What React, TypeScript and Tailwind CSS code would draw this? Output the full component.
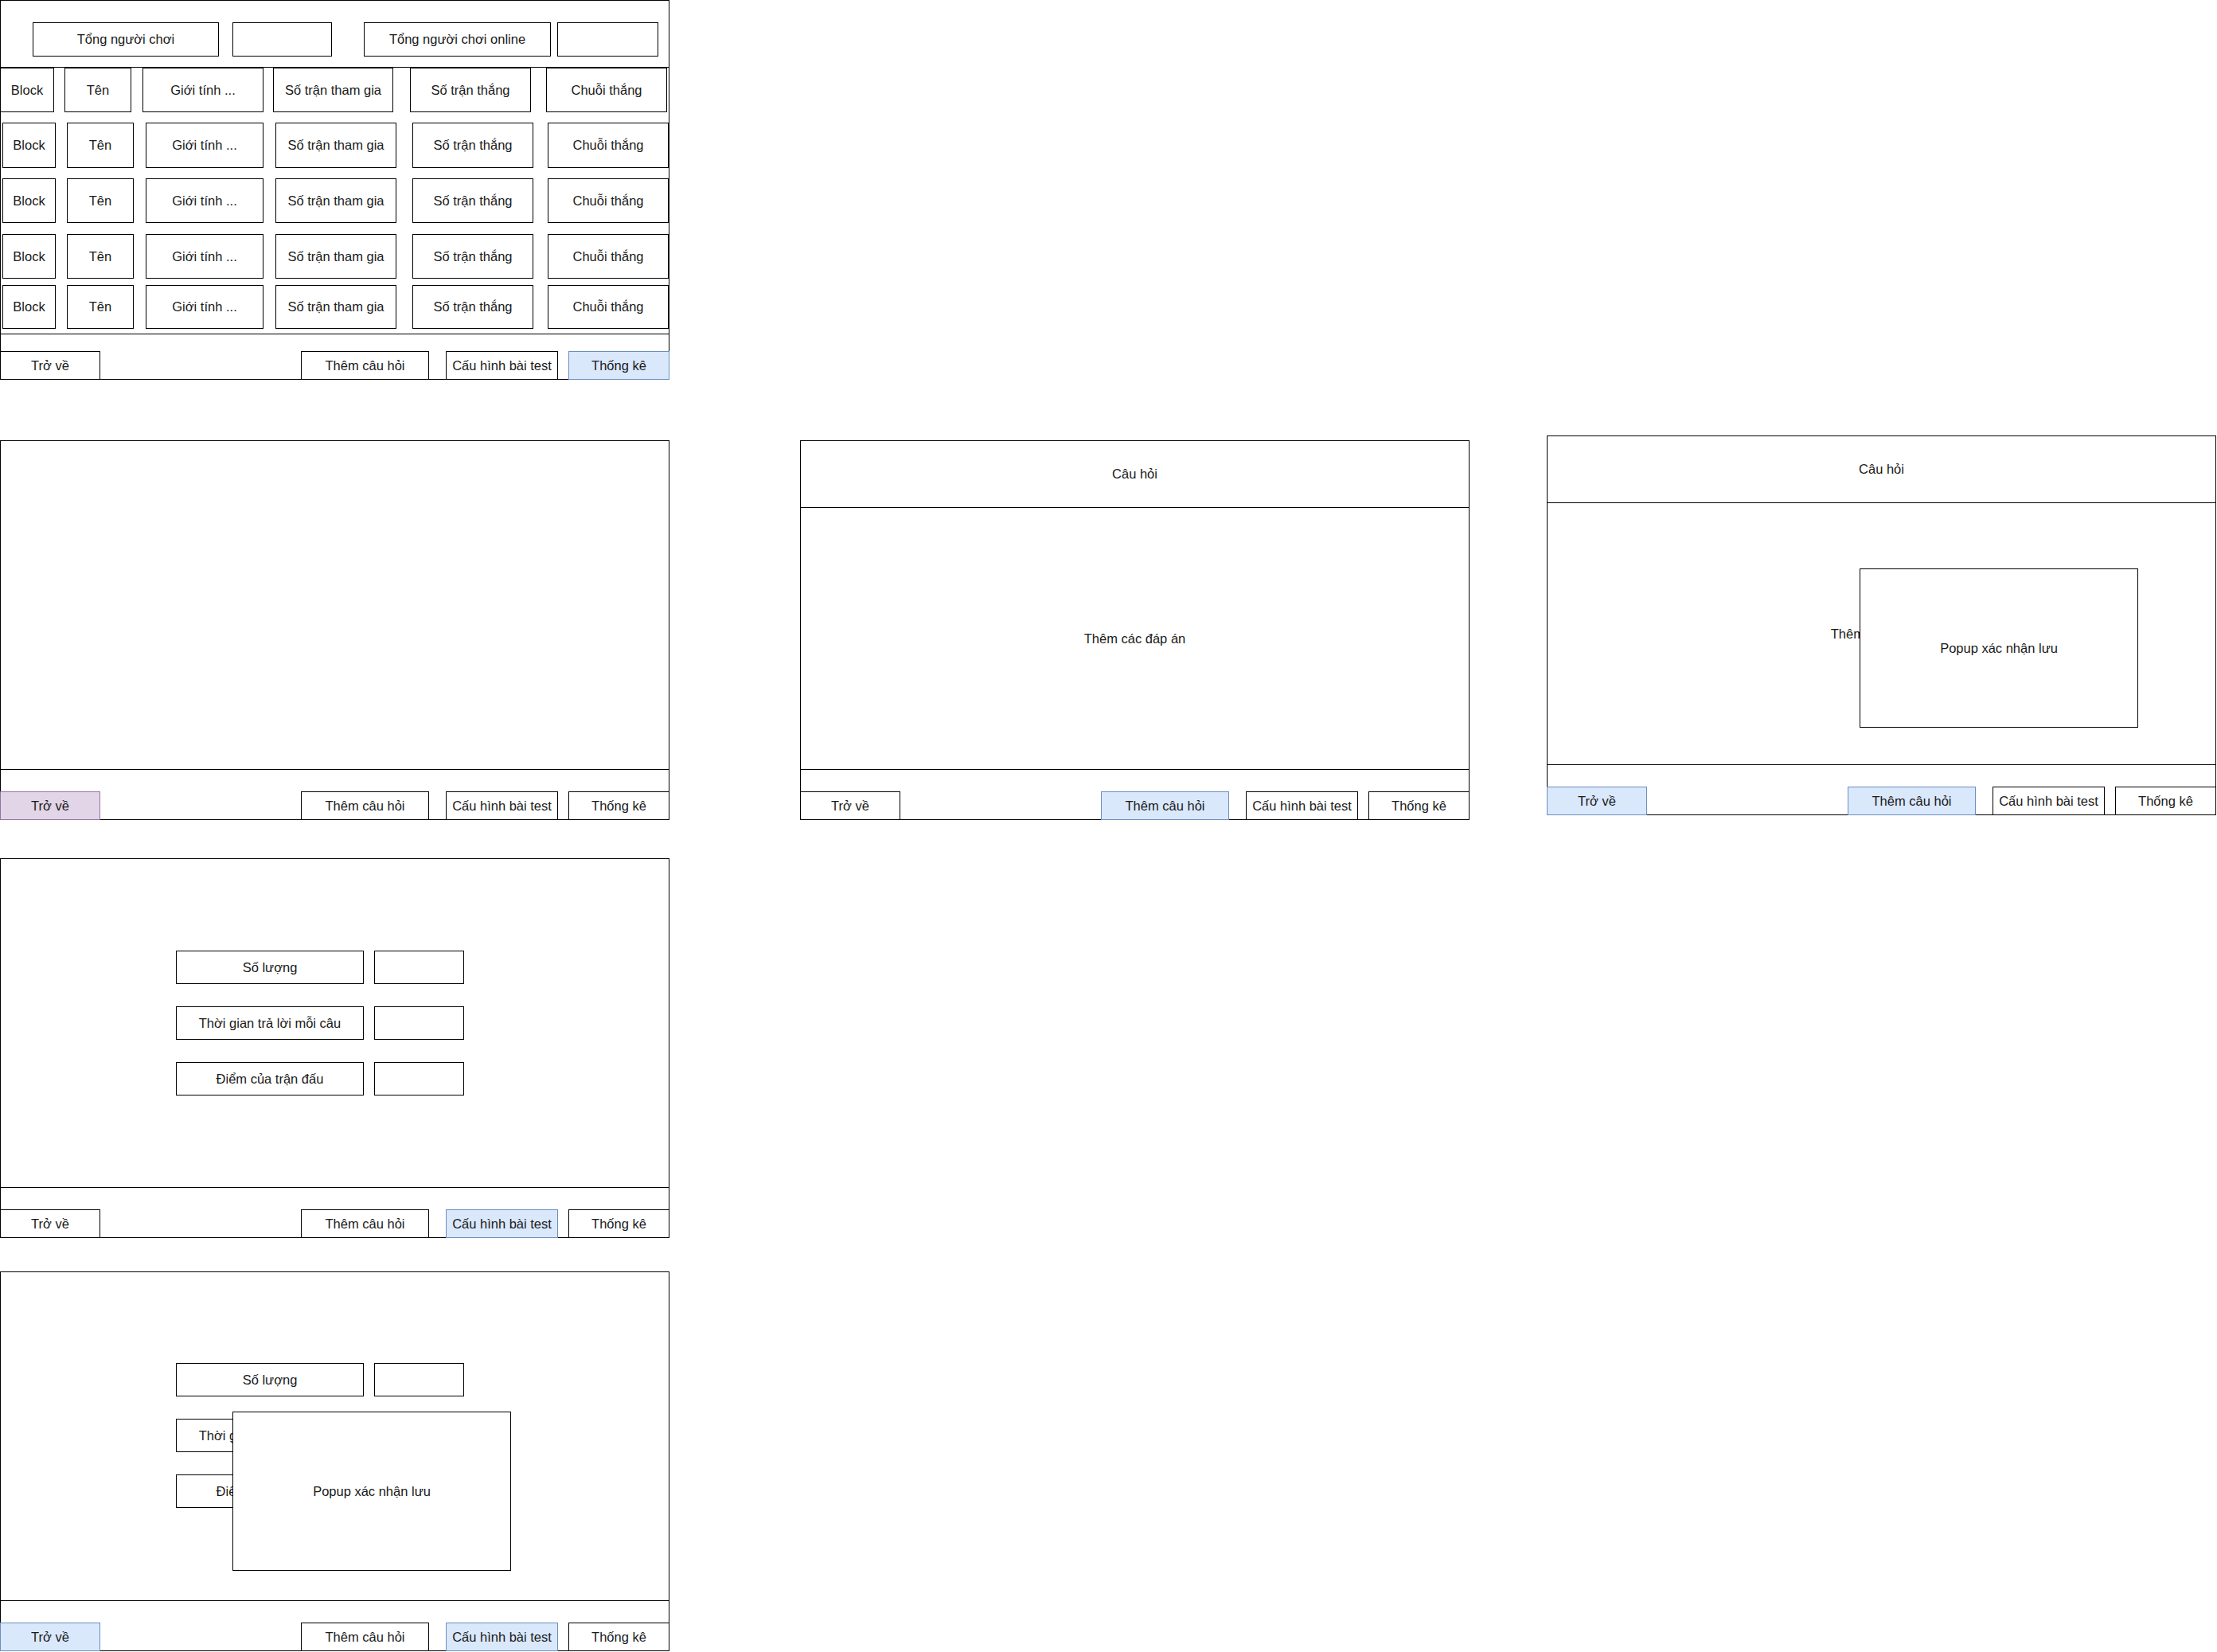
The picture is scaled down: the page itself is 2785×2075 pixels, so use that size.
import { ReactNode } from "react"
import clsx from "clsx"

type Tone = "plain" | "blue" | "purple"

const tones: Record<Tone, string> = {
  plain: "bg-white border-[#000]",
  blue: "bg-[#dae8fc] border-[#6c8ebf]",
  purple: "bg-[#e1d5e7] border-[#9673a6]",
}

function Box({ className, tone = "plain", children }: { className?: string; tone?: Tone; children?: ReactNode }) {
  return (
    <div className={clsx("flex shrink-0 items-center justify-center border text-center whitespace-nowrap", tones[tone], className)}>
      {children}
    </div>
  )
}

function NavBar({ back = "plain", active }: { back?: Tone; active?: "add" | "config" | "stats" }) {
  return (
    <div className="flex h-[36px]">
      <Box tone={back} className="w-[126px]">Trở về</Box>
      <Box tone={active === "add" ? "blue" : "plain"} className="ml-[252px] w-[161px]">Thêm câu hỏi</Box>
      <Box tone={active === "config" ? "blue" : "plain"} className="ml-[21px] w-[141px]">Cấu hình bài test</Box>
      <Box tone={active === "stats" ? "blue" : "plain"} className="ml-[13px] w-[127px]">Thống kê</Box>
    </div>
  )
}

function Frame({ className, children, nav }: { className: string; children: ReactNode; nav: ReactNode }) {
  return (
    <div className={clsx("absolute flex h-[477px] w-[841px] flex-col bg-white ring-1 ring-inset ring-[#000]", className)}>
      {children}
      <div className="mt-auto">{nav}</div>
    </div>
  )
}

function Popup({ className }: { className: string }) {
  return (
    <Box className={clsx("absolute z-10 h-[200px] w-[350px]", className)}>Popup xác nhận lưu</Box>
  )
}

function HeaderRow() {
  return (
    <div className="flex h-[56px]">
      <Box className="w-[68px]">Block</Box>
      <Box className="ml-[13px] w-[84px]">Tên</Box>
      <Box className="ml-[14px] w-[152px]">Giới tính ...</Box>
      <Box className="ml-[12px] w-[151px]">Số trận tham gia</Box>
      <Box className="ml-[21px] w-[152px]">Số trận thắng</Box>
      <Box className="ml-[19px] w-[152px]">Chuỗi thắng</Box>
    </div>
  )
}

function DataRow({ className }: { className: string }) {
  return (
    <div className={clsx("flex pl-[3px]", className)}>
      <Box className="w-[67px]">Block</Box>
      <Box className="ml-[14px] w-[84px]">Tên</Box>
      <Box className="ml-[15px] w-[148px]">Giới tính ...</Box>
      <Box className="ml-[15px] w-[152px]">Số trận tham gia</Box>
      <Box className="ml-[20px] w-[152px]">Số trận thắng</Box>
      <Box className="ml-[18px] w-[152px]">Chuỗi thắng</Box>
    </div>
  )
}

function ConfigForm({ className }: { className: string }) {
  const labels = ["Số lượng", "Thời gian trả lời mỗi câu", "Điểm của trận đấu"]
  return (
    <div className={clsx("flex flex-col gap-[28px] pl-[221px]", className)}>
      {labels.map((label) => (
        <div key={label} className="flex h-[42px] gap-[13px]">
          <Box className="w-[236px]">{label}</Box>
          <Box className="w-[113px]" />
        </div>
      ))}
    </div>
  )
}

function QuestionBody({ children }: { children?: ReactNode }) {
  return (
    <div className="relative flex h-[414px] flex-col border-b border-[#000]">
      <div className="flex h-[85px] items-center justify-center border-b border-[#000]">Câu hỏi</div>
      <div className="flex flex-1 items-center justify-center">Thêm các đáp án</div>
      {children}
    </div>
  )
}

export default function App() {
  return (
    <div className="relative h-[2075px] w-[2785px] overflow-hidden bg-white font-['Liberation_Sans',Arial,sans-serif] text-[16.5px] text-[#1a1a1a]">
      {/* thống kê */}
      <Frame className="left-0 top-0" nav={<NavBar active="stats" />}>
        <div className="flex pl-[41px] pt-[28px]">
          <Box className="h-[43px] w-[234px]">Tổng người chơi</Box>
          <Box className="ml-[17px] h-[43px] w-[125px]" />
          <Box className="ml-[40px] h-[43px] w-[235px]">Tổng người chơi online</Box>
          <Box className="ml-[8px] h-[43px] w-[127px]" />
        </div>
        <div className="mt-[13px] h-[336px] border-y border-[#000]">
          <HeaderRow />
          <DataRow className="mt-[13px] h-[57px]" />
          <DataRow className="mt-[13px] h-[56px]" />
          <DataRow className="mt-[14px] h-[56px]" />
          <DataRow className="mt-[8px] h-[55px]" />
        </div>
      </Frame>

      {/* trở về */}
      <Frame className="left-0 top-[553px]" nav={<NavBar back="purple" />}>
        <div className="h-[414px] border-b border-[#000]" />
      </Frame>

      {/* thêm câu hỏi */}
      <Frame className="left-[1005px] top-[553px]" nav={<NavBar active="add" />}>
        <QuestionBody />
      </Frame>

      <Frame className="left-[1943px] top-[547px]" nav={<NavBar back="blue" active="add" />}>
        <QuestionBody>
          <Popup className="left-[393px] top-[167px]" />
        </QuestionBody>
      </Frame>

      {/* cấu hình bài test */}
      <Frame className="left-0 top-[1078px]" nav={<NavBar active="config" />}>
        <div className="h-[414px] border-b border-[#000]">
          <ConfigForm className="pt-[116px]" />
        </div>
      </Frame>

      <Frame className="left-0 top-[1597px]" nav={<NavBar back="blue" active="config" />}>
        <div className="relative h-[414px] border-b border-[#000]">
          <ConfigForm className="pt-[115px]" />
          <Popup className="left-[292px] top-[176px]" />
        </div>
      </Frame>
    </div>
  )
}
